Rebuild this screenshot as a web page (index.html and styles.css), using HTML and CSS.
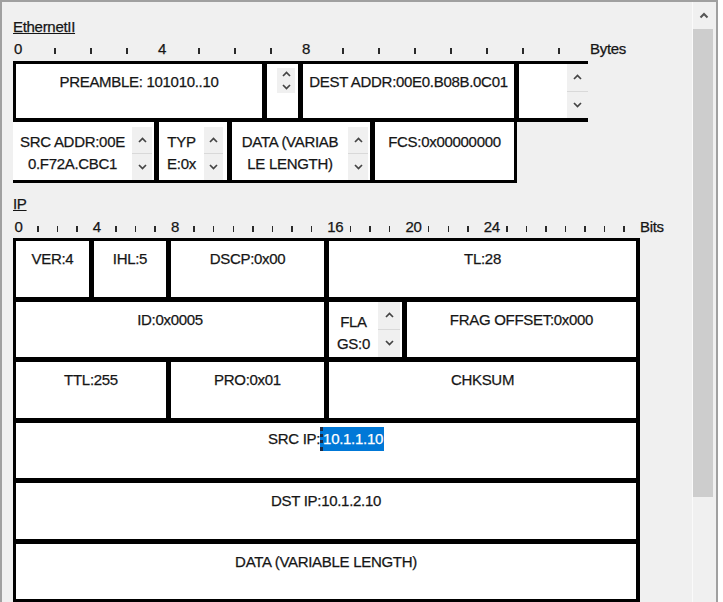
FILE: index.html
```html
<!DOCTYPE html>
<html>
<head>
<meta charset="utf-8">
<title>PDU Details</title>
<link rel="stylesheet" href="styles.css">
</head>
<body>
<div class="pane">
  <div class="content">
    <section class="proto">
      <div class="title"><span class="title-link">EthernetII</span></div>
      <div class="ruler ruler-bytes">
        <span class="slot">0</span><span class="slot"><i class="tick"></i></span><span class="slot"><i class="tick"></i></span><span class="slot"><i class="tick"></i></span>
        <span class="slot">4</span><span class="slot"><i class="tick"></i></span><span class="slot"><i class="tick"></i></span><span class="slot"><i class="tick"></i></span>
        <span class="slot">8</span><span class="slot"><i class="tick"></i></span><span class="slot"><i class="tick"></i></span><span class="slot"><i class="tick"></i></span>
        <span class="slot"><i class="tick"></i></span><span class="slot"><i class="tick"></i></span><span class="slot"><i class="tick"></i></span><span class="slot"><i class="tick"></i></span>
        <span class="unit">Bytes</span>
      </div>
      <div class="eth-row1">
        <div class="cell f-preamble">PREAMBLE: 101010..10</div>
        <div class="cell f-sfd">
          <div class="spin spin-mini">
            <div class="spin-up"><svg width="9" height="6" viewBox="0 0 9 6"><path d="M1 5 4.5 1.5 8 5" fill="none" stroke="#444" stroke-width="1.7"/></svg></div>
            <div class="spin-down"><svg width="9" height="6" viewBox="0 0 9 6"><path d="M1 1 4.5 4.5 8 1" fill="none" stroke="#444" stroke-width="1.7"/></svg></div>
          </div>
        </div>
        <div class="cell f-dest">DEST ADDR:00E0.B08B.0C01</div>
        <div class="cell spinbox f-src-cont">
          <div class="txt"></div>
          <div class="spin">
            <div class="spin-up"><svg width="9" height="6" viewBox="0 0 9 6"><path d="M1 5 4.5 1.5 8 5" fill="none" stroke="#444" stroke-width="1.7"/></svg></div>
            <div class="spin-down"><svg width="9" height="6" viewBox="0 0 9 6"><path d="M1 1 4.5 4.5 8 1" fill="none" stroke="#444" stroke-width="1.7"/></svg></div>
          </div>
        </div>
      </div>
      <div class="eth-row2">
        <div class="cell spinbox f-src">
          <div class="txt">SRC ADDR:00E<br>0.F72A.CBC1</div>
          <div class="spin">
            <div class="spin-up"><svg width="9" height="6" viewBox="0 0 9 6"><path d="M1 5 4.5 1.5 8 5" fill="none" stroke="#444" stroke-width="1.7"/></svg></div>
            <div class="spin-down"><svg width="9" height="6" viewBox="0 0 9 6"><path d="M1 1 4.5 4.5 8 1" fill="none" stroke="#444" stroke-width="1.7"/></svg></div>
          </div>
        </div>
        <div class="cell spinbox f-type">
          <div class="txt">TYP<br>E:0x</div>
          <div class="spin">
            <div class="spin-up"><svg width="9" height="6" viewBox="0 0 9 6"><path d="M1 5 4.5 1.5 8 5" fill="none" stroke="#444" stroke-width="1.7"/></svg></div>
            <div class="spin-down"><svg width="9" height="6" viewBox="0 0 9 6"><path d="M1 1 4.5 4.5 8 1" fill="none" stroke="#444" stroke-width="1.7"/></svg></div>
          </div>
        </div>
        <div class="cell spinbox f-data">
          <div class="txt">DATA (VARIAB<br>LE LENGTH)</div>
          <div class="spin">
            <div class="spin-up"><svg width="9" height="6" viewBox="0 0 9 6"><path d="M1 5 4.5 1.5 8 5" fill="none" stroke="#444" stroke-width="1.7"/></svg></div>
            <div class="spin-down"><svg width="9" height="6" viewBox="0 0 9 6"><path d="M1 1 4.5 4.5 8 1" fill="none" stroke="#444" stroke-width="1.7"/></svg></div>
          </div>
        </div>
        <div class="cell f-fcs">FCS:0x00000000</div>
      </div>
    </section>

    <section class="proto proto-ip">
      <div class="title"><span class="title-link">IP</span></div>
      <div class="ruler ruler-bits">
        <span class="slot">0</span><span class="slot"><i class="tick"></i></span><span class="slot"><i class="tick"></i></span><span class="slot"><i class="tick"></i></span>
        <span class="slot">4</span><span class="slot"><i class="tick"></i></span><span class="slot"><i class="tick"></i></span><span class="slot"><i class="tick"></i></span>
        <span class="slot">8</span><span class="slot"><i class="tick"></i></span><span class="slot"><i class="tick"></i></span><span class="slot"><i class="tick"></i></span>
        <span class="slot"><i class="tick"></i></span><span class="slot"><i class="tick"></i></span><span class="slot"><i class="tick"></i></span><span class="slot"><i class="tick"></i></span>
        <span class="slot">16</span><span class="slot"><i class="tick"></i></span><span class="slot"><i class="tick"></i></span><span class="slot"><i class="tick"></i></span>
        <span class="slot">20</span><span class="slot"><i class="tick"></i></span><span class="slot"><i class="tick"></i></span><span class="slot"><i class="tick"></i></span>
        <span class="slot">24</span><span class="slot"><i class="tick"></i></span><span class="slot"><i class="tick"></i></span><span class="slot"><i class="tick"></i></span>
        <span class="slot"><i class="tick"></i></span><span class="slot"><i class="tick"></i></span><span class="slot"><i class="tick"></i></span><span class="slot"><i class="tick"></i></span>
        <span class="unit">Bits</span>
      </div>
      <div class="ip-frame">
        <div class="ip-row">
          <div class="cell b-ver">VER:4</div>
          <div class="cell b-ihl">IHL:5</div>
          <div class="cell b-dscp">DSCP:0x00</div>
          <div class="cell b-tl">TL:28</div>
        </div>
        <div class="ip-row">
          <div class="cell b-id">ID:0x0005</div>
          <div class="cell spinbox b-flags">
            <div class="txt">FLA<br>GS:0</div>
            <div class="spin">
              <div class="spin-up"><svg width="9" height="6" viewBox="0 0 9 6"><path d="M1 5 4.5 1.5 8 5" fill="none" stroke="#444" stroke-width="1.7"/></svg></div>
              <div class="spin-down"><svg width="9" height="6" viewBox="0 0 9 6"><path d="M1 1 4.5 4.5 8 1" fill="none" stroke="#444" stroke-width="1.7"/></svg></div>
            </div>
          </div>
          <div class="cell b-frag">FRAG OFFSET:0x000</div>
        </div>
        <div class="ip-row">
          <div class="cell b-ttl">TTL:255</div>
          <div class="cell b-pro">PRO:0x01</div>
          <div class="cell b-chk">CHKSUM</div>
        </div>
        <div class="ip-row">
          <div class="cell b-full b-srcip">SRC IP:<span class="sel">10.1.1.10</span></div>
        </div>
        <div class="ip-row">
          <div class="cell b-full">DST IP:10.1.2.10</div>
        </div>
        <div class="ip-row">
          <div class="cell b-full">DATA (VARIABLE LENGTH)</div>
        </div>
      </div>
    </section>
  </div>
  <div class="scrollbar">
    <div class="sb-up"><svg width="10" height="7" viewBox="0 0 10 7"><path d="M1.5 5.5 5 2 8.5 5.5" fill="none" stroke="#555" stroke-width="2"/></svg></div>
    <div class="sb-thumb"></div>
  </div>
</div>
</body>
</html>
```

FILE: styles.css
```css
html, body {
  margin: 0;
  padding: 0;
  background: #ffffff;
  overflow: hidden;
}

body {
  width: 723px;
  height: 602px;
  font-family: "Liberation Sans", Arial, sans-serif;
  font-size: 15px;
  letter-spacing: -0.3px;
  color: #161616;
  -webkit-text-stroke: 0.25px #161616;
}

.pane {
  width: 718px;
  height: 660px;
  box-sizing: border-box;
  border: 2px solid #a0a0a0;
  background: #f0f0f0;
  display: flex;
}

.content {
  width: 690px;
  flex: none;
  box-sizing: border-box;
  padding: 17px 0 0 11px;
}

/* titles */
.title {
  height: 16px;
  line-height: 16px;
}

.title-link {
  text-decoration: underline;
}

.proto-ip {
  margin-top: 12.5px;
}

/* rulers */
.ruler {
  display: flex;
  height: 16px;
  line-height: 16px;
  margin-top: 6px;
  white-space: nowrap;
}

.ruler-bytes {
  margin-left: 1px;
}

.ruler-bits {
  margin-left: 1.5px;
  margin-top: 7.5px;
}

.slot {
  flex: none;
  display: block;
  height: 16px;
}

.ruler-bytes .slot {
  width: 36px;
}

.ruler-bits .slot {
  width: 19.55px;
}

.tick {
  display: block;
  width: 1.5px;
  height: 6px;
  margin: 7px 0 0 4px;
  background: #2a2a2a;
}

.ruler-bits .tick {
  margin-left: 3px;
}

.unit {
  flex: none;
}

/* ethernet frame */
.eth-row1 {
  display: flex;
  gap: 5px;
  width: 572px;
  height: 54px;
  margin-top: 4px;
  padding: 3px 0 4px 3px;
  background: #000;
}

.eth-row2 {
  display: flex;
  gap: 5px;
  width: 501px;
  height: 58px;
  padding: 0 3px 3px 0;
  background: #000;
}

.cell {
  flex: none;
  box-sizing: border-box;
  background: #fff;
  text-align: center;
  line-height: 22px;
  padding-top: 7px;
  overflow: hidden;
  white-space: nowrap;
}

.f-preamble { width: 246px; }
.f-sfd { width: 31px; padding: 4px 0 0 10px; }
.f-dest { width: 211px; }
.f-src-cont { width: 69px; }
.f-src { width: 141px; }
.f-type { width: 68px; }
.f-data { width: 138px; }
.f-fcs { width: 139px; padding-top: 9px; }

.spinbox {
  display: flex;
  padding: 0;
}

.spinbox .txt {
  flex: none;
  padding-top: 9px;
}

.f-src-cont .txt { width: 48px; }
.f-src .txt { width: 119px; }
.f-type .txt { width: 45px; }
.f-data .txt { width: 116px; }

/* spinner */
.spin {
  flex: none;
  width: 20px;
  display: flex;
  flex-direction: column;
  background: #f0f0f0;
}

.spin-up,
.spin-down {
  flex: 1;
  display: flex;
  align-items: center;
  justify-content: center;
}

.spin-up {
  border-bottom: 1px solid #d9d9d9;
}

.spin-mini {
  width: 18px;
  height: 25px;
}

.spin-mini .spin-up {
  border-bottom: none;
}

.f-src-cont .spin { width: 21px; }
.f-src .spin,
.f-type .spin,
.f-data .spin { margin-top: 5px; }
.f-type .spin { width: 19px; }

/* ip frame */
.ip-frame {
  display: flex;
  flex-direction: column;
  gap: 5px;
  width: 620px;
  margin-top: 3px;
  padding: 3px 4px 4px 3px;
  background: #000;
}

.ip-row {
  display: flex;
  gap: 5px;
  height: 55.5px;
}

.b-ver { width: 73px; }
.b-ihl { width: 72px; }
.b-dscp { width: 153px; }
.b-tl { width: 307px; }
.b-id { width: 308px; }
.b-flags { width: 73px; }
.b-flags .txt { width: 49px; }
.b-flags .spin { width: 22px; }
.b-frag { width: 229px; }
.b-ttl { width: 150px; }
.b-pro { width: 153px; }
.b-chk { width: 307px; }
.b-full { width: 620px; }

.b-srcip {
  padding-top: 4px;
}

.sel {
  display: inline-block;
  line-height: 24px;
  background: #0078d7;
  color: #fff;
  -webkit-text-stroke: 0.25px #fff;
  padding-right: 1px;
  border-left: 3px dotted #1c2a44;
}

/* scrollbar */
.scrollbar {
  flex: none;
  width: 22px;
  box-sizing: border-box;
  border-left: 1px solid #fafafa;
  background: #f0f0f0;
  display: flex;
  flex-direction: column;
}

.sb-up {
  height: 27px;
  display: flex;
  align-items: center;
  justify-content: center;
}

.sb-thumb {
  height: 468px;
  margin-right: 1px;
  background: #cdcdcd;
}
```
